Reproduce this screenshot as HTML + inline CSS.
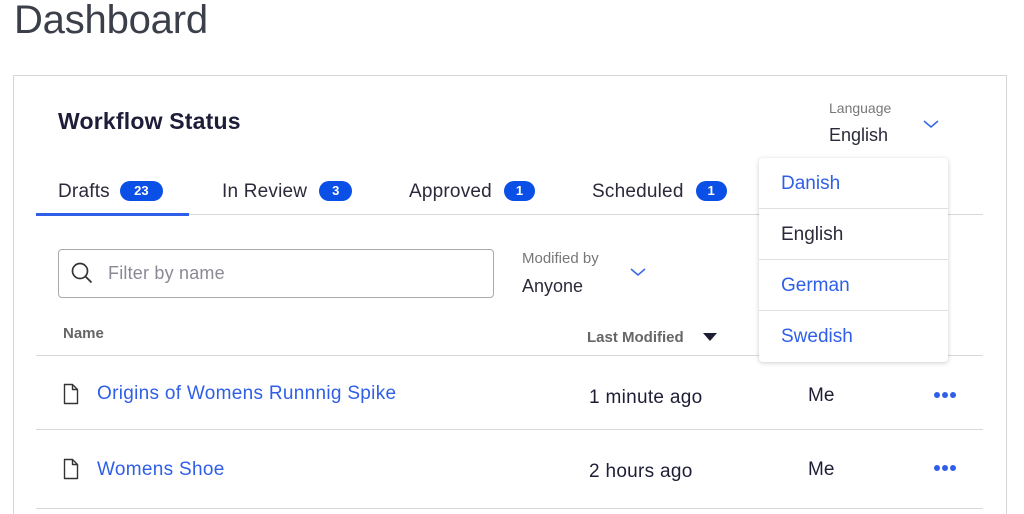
<!DOCTYPE html>
<html><head><style>
*{margin:0;padding:0;box-sizing:border-box}
html,body{width:1024px;height:514px;overflow:hidden}
body{background:#fff;font-family:"Liberation Sans",sans-serif;position:relative;color:#1d1d35}
.a{position:absolute;white-space:nowrap}
.badge{display:inline-block;background:#0a4fe6;color:#fff;border-radius:10px;font-size:13px;font-weight:bold;height:20px;line-height:20px;text-align:center;vertical-align:2px;margin-left:10px;letter-spacing:0}
.tab{font-size:19px;color:#2a2a3a;letter-spacing:0.2px}
.hl{position:absolute;height:1px;background:#d8d8dc}
.blue{color:#2f5fe8}
</style></head><body>
<div class="a" style="left:14px;top:-2px;font-size:40px;font-weight:300;color:#3a3f4a;letter-spacing:-0.2px">Dashboard</div>
<div class="a" style="left:13px;top:75px;width:994px;height:460px;border:1px solid #d6d6da"></div>
<div class="a" style="left:58px;top:108px;font-size:23px;font-weight:bold;color:#1d1d3a;letter-spacing:0.2px">Workflow Status</div>
<div class="a" style="left:829px;top:100px;font-size:14px;color:#777">Language</div>
<div class="a" style="left:829px;top:125px;font-size:18px;color:#2a2a3a">English</div>
<svg class="a" style="left:922px;top:118px" width="18" height="12"><path d="M2 3l7 6 7-6" stroke="#3b6ae8" stroke-width="1.6" fill="none"/></svg>

<div class="a tab" style="left:58px;top:181px">Drafts<span class="badge" style="width:43px">23</span></div>
<div class="a tab" style="left:222px;top:181px">In Review<span class="badge" style="width:33px;margin-left:12px">3</span></div>
<div class="a tab" style="left:409px;top:181px">Approved<span class="badge" style="width:31px;margin-left:12px">1</span></div>
<div class="a tab" style="left:592px;top:181px">Scheduled<span class="badge" style="width:31px;margin-left:12px">1</span></div>
<div class="hl" style="left:36px;top:214px;width:947px"></div>
<div class="a" style="left:36px;top:213px;width:153px;height:3px;background:#2f5fe8"></div>

<div class="a" style="left:58px;top:249px;width:436px;height:49px;border:1px solid #a9a9b0;border-radius:4px"></div>
<svg class="a" style="left:70px;top:261px" width="26" height="26"><circle cx="10" cy="10" r="7.5" stroke="#333" stroke-width="1.7" fill="none"/><path d="M15.5 15.5l6 6" stroke="#333" stroke-width="1.8"/></svg>
<div class="a" style="left:108px;top:263px;font-size:18px;color:#8a8a94;letter-spacing:0.2px">Filter by name</div>
<div class="a" style="left:522px;top:250px;font-size:15px;color:#777">Modified by</div>
<div class="a" style="left:522px;top:276px;font-size:18px;color:#2a2a3a">Anyone</div>
<svg class="a" style="left:629px;top:266px" width="18" height="12"><path d="M2 3l7 6 7-6" stroke="#3b6ae8" stroke-width="1.6" fill="none"/></svg>

<div class="a" style="left:63px;top:325px;font-size:15px;color:#666;font-weight:bold">Name</div>
<div class="a" style="left:587px;top:329px;font-size:15px;color:#666;font-weight:bold">Last Modified</div>
<svg class="a" style="left:702px;top:332px" width="16" height="10"><path d="M1 1h14l-7 8z" fill="#1d1d35"/></svg>
<div class="hl" style="left:36px;top:355px;width:947px"></div>

<svg class="a" style="left:63px;top:383px" width="16" height="22"><path d="M1.5 1.5h8l5 5v14h-13z M9.5 1.5v5h5" stroke="#333" stroke-width="1.4" fill="none" stroke-linejoin="round"/></svg>
<div class="a blue" style="left:97px;top:383px;font-size:19px;letter-spacing:0.3px">Origins of Womens Runnnig Spike</div>
<div class="a" style="left:589px;top:387px;font-size:19px;letter-spacing:0.3px">1 minute ago</div>
<div class="a" style="left:808px;top:385px;font-size:19px">Me</div>
<svg class="a" style="left:933px;top:390px" width="26" height="10"><circle cx="4" cy="5" r="3" fill="#2f5fe8"/><circle cx="12" cy="5" r="3" fill="#2f5fe8"/><circle cx="20" cy="5" r="3" fill="#2f5fe8"/></svg>
<div class="hl" style="left:36px;top:429px;width:947px"></div>

<svg class="a" style="left:63px;top:458px" width="16" height="22"><path d="M1.5 1.5h8l5 5v14h-13z M9.5 1.5v5h5" stroke="#333" stroke-width="1.4" fill="none" stroke-linejoin="round"/></svg>
<div class="a blue" style="left:97px;top:459px;font-size:19px;letter-spacing:0.3px">Womens Shoe</div>
<div class="a" style="left:589px;top:461px;font-size:19px;letter-spacing:0.3px">2 hours ago</div>
<div class="a" style="left:808px;top:459px;font-size:19px">Me</div>
<svg class="a" style="left:933px;top:463px" width="26" height="10"><circle cx="4" cy="5" r="3" fill="#2f5fe8"/><circle cx="12" cy="5" r="3" fill="#2f5fe8"/><circle cx="20" cy="5" r="3" fill="#2f5fe8"/></svg>
<div class="hl" style="left:36px;top:508px;width:947px"></div>

<div class="a" style="left:759px;top:158px;width:189px;height:204px;background:#fff;border-radius:4px;box-shadow:0 1px 5px rgba(0,0,0,.2)">
 <div style="height:51px;border-bottom:1px solid #e0e0e4;padding:15px 0 0 22px;font-size:19px;color:#2f5fe8">Danish</div>
 <div style="height:51px;border-bottom:1px solid #e0e0e4;padding:15px 0 0 22px;font-size:19px;color:#2a2a3a">English</div>
 <div style="height:51px;border-bottom:1px solid #e0e0e4;padding:15px 0 0 22px;font-size:19px;color:#2f5fe8">German</div>
 <div style="height:51px;padding:15px 0 0 22px;font-size:19px;color:#2f5fe8">Swedish</div>
</div>
</body></html>
